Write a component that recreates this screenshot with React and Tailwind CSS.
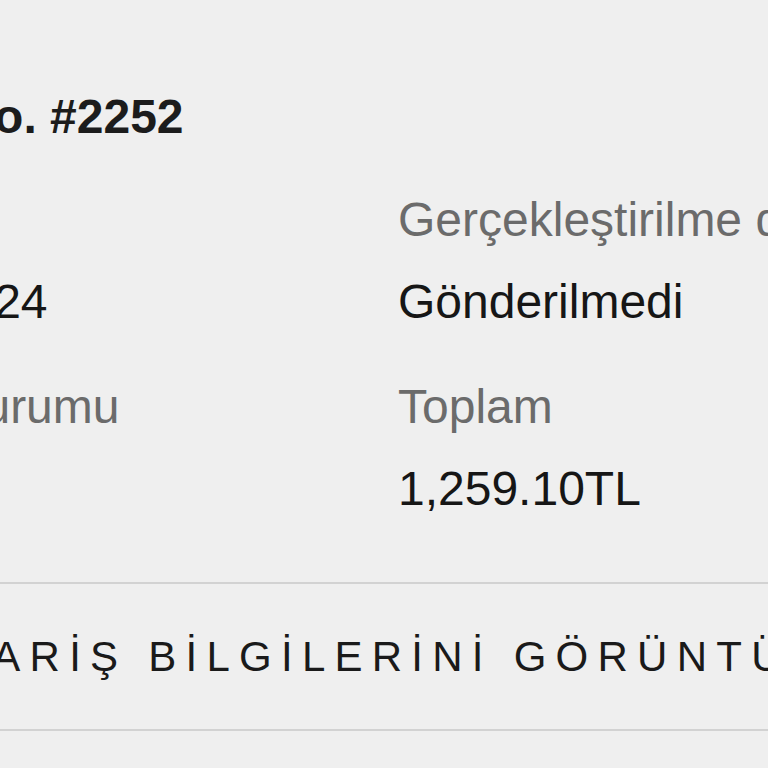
import React from 'react'

// Order summary block: heading, two columns of label/value pairs, and a link row
const fields = [
  [
    { label: 'Tarih', value: 'Oca 8, 2024' },
    { label: 'Ödeme durumu', value: 'Ödendi' },
  ],
  [
    { label: 'Gerçekleştirilme durumu', value: 'Gönderilmedi' },
    { label: 'Toplam', value: '1,259.10TL' },
  ],
]

function Field({ label, value, last }) {
  return (
    <div className={last ? '' : 'mb-[51px]'}>
      <p className="text-[48px] leading-[54px] text-[#6b6b6b] whitespace-nowrap">{label}</p>
      <p className="mt-[28px] text-[48px] leading-[54px] text-[#161616] whitespace-nowrap">{value}</p>
    </div>
  )
}

export default function App() {
  return (
    <div
      className="w-full h-[768px] overflow-hidden bg-[#efefef]"
      style={{ fontFamily: '"Liberation Sans", Arial, sans-serif' }}
    >
      <div className="ml-[-214px] w-[1400px] pt-[90px]">
        <h1 className="text-[48px] leading-[54px] font-bold text-[#1c1c1c] whitespace-nowrap">
          Sipariş No. #2252
        </h1>

        <div className="mt-[49px] grid grid-cols-[612px_1fr]">
          {fields.map((col, i) => (
            <div key={i}>
              {col.map((f, j) => (
                <Field key={f.label} label={f.label} value={f.value} last={j === col.length - 1} />
              ))}
            </div>
          ))}
        </div>

        <div className="mt-[66px] h-[149px] border-y-2 border-[#d2d2d2] flex items-center pl-[114px]">
          <span className="text-[42px] leading-[48px] tracking-[9.25px] text-[#1a1a1a] whitespace-nowrap">
            SİPARİŞ BİLGİLERİNİ GÖRÜNTÜLE
          </span>
        </div>
      </div>
    </div>
  )
}
